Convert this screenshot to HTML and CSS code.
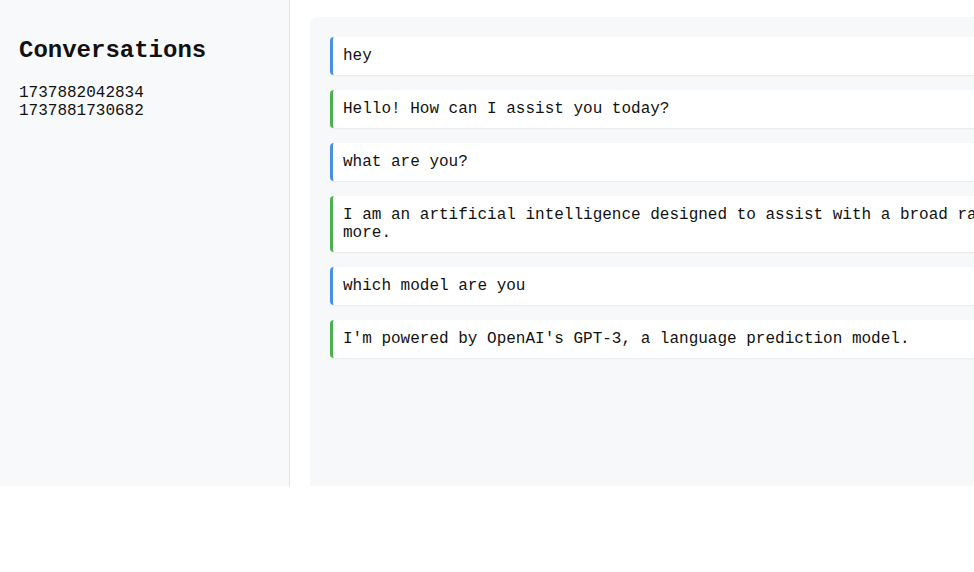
FILE: index.html
```html
<!DOCTYPE html>
<html>
<head>
<meta charset="utf-8">
<link rel="stylesheet" href="styles.css">
</head>
<body>
<div class="app">
  <aside class="sidebar">
    <h2 class="sidebar-title">Conversations</h2>
    <ul class="conv-list">
      <li>1737882042834</li>
      <li>1737881730682</li>
    </ul>
  </aside>
  <main class="main">
    <section class="chat">
      <div class="msg user">hey</div>
      <div class="msg bot">Hello! How can I assist you today?</div>
      <div class="msg user">what are you?</div>
      <div class="msg bot">I am an artificial intelligence designed to assist with a broad range of tasks and more.</div>
      <div class="msg user">which model are you</div>
      <div class="msg bot">I'm powered by OpenAI's GPT-3, a language prediction model.</div>
    </section>
  </main>
</div>
</body>
</html>
```
FILE: styles.css
```css
html, body {
  margin: 0;
  padding: 0;
  background: #ffffff;
  overflow: hidden;
}
body {
  font-family: "Liberation Mono", "Courier New", monospace;
  font-size: 16px;
  color: #111;
}
.app {
  display: flex;
  height: 85vh;
  width: 974px;
  overflow: hidden;
}
.sidebar {
  flex: 0 0 290px;
  width: 290px;
  background: #f8f9fa;
  border-right: 1px solid #e2e3e5;
  padding: 20px 19px;
  box-sizing: border-box;
}
.sidebar-title {
  font-size: 24px;
  font-weight: bold;
  margin: 17px 0 20px;
  line-height: 27px;
}
.conv-list {
  list-style: none;
  margin: 0;
  padding: 0;
  line-height: 18px;
}
.main {
  flex: 0 0 auto;
  padding: 17px 20px 0;
}
.chat {
  width: 853px;
  height: 100%;
  background: #f7f8fa;
  border-radius: 8px 8px 0 0;
  padding: 20px;
  box-sizing: border-box;
  display: flex;
  flex-direction: column;
  gap: 15px;
}
.msg {
  background: #ffffff;
  border-left: 3px solid #4a90e2;
  border-radius: 4px;
  padding: 10px 10px;
  line-height: 18px;
  box-shadow: 0 1px 2px rgba(0,0,0,0.06);
}
.msg.bot {
  border-left-color: #4caf50;
}
.msg.user {
  border-left-color: #4a90e2;
}
```
